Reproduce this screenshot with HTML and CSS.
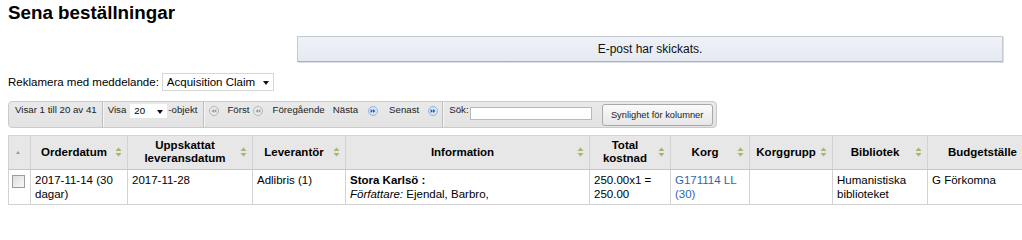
FILE: index.html
```html
<!DOCTYPE html>
<html lang="sv">
<head>
<meta charset="utf-8">
<title>Sena beställningar</title>
<link rel="stylesheet" href="styles.css">
</head>
<body>
<h1 class="title">Sena beställningar</h1>

<div class="msg">E-post har skickats.</div>

<div class="claim">
  <label class="claim-label" for="claim">Reklamera med meddelande:</label>
  <span class="sel-wrap sel-claim"><select id="claim" class="sel"><option>Acquisition Claim</option></select></span>
</div>

<div class="toolbar">
  <div class="seg seg-info">Visar 1 till 20 av 41</div>
  <div class="seg seg-len"><span>Visa</span><span class="sel-wrap sel-len"><select class="sel"><option>20</option></select></span><span>-objekt</span></div>
  <div class="seg seg-pages">
    <svg class="pg pg-first" width="10" height="10" viewBox="0 0 10 10"><circle cx="5" cy="5" r="4.5" class="pg-off"/><path d="M5 3L2.6 5L5 7Z M7.4 3L5 5L7.4 7Z" class="pg-off-a"/></svg>
    <span class="pg-t t-first">Först</span>
    <svg class="pg pg-prev" width="10" height="10" viewBox="0 0 10 10"><circle cx="5" cy="5" r="4.5" class="pg-off"/><path d="M5 3L2.6 5L5 7Z M7.4 3L5 5L7.4 7Z" class="pg-off-a"/></svg>
    <span class="pg-t t-prev">Föregående</span>
    <span class="pg-t t-next">Nästa</span>
    <svg class="pg pg-next" width="10" height="10" viewBox="0 0 10 10"><circle cx="5" cy="5" r="4.5" class="pg-on"/><path d="M2.6 3L5 5L2.6 7Z M5 3L7.4 5L5 7Z" class="pg-on-a"/></svg>
    <span class="pg-t t-last">Senast</span>
    <svg class="pg pg-last" width="10" height="10" viewBox="0 0 10 10"><circle cx="5" cy="5" r="4.5" class="pg-on"/><path d="M2.6 3L5 5L2.6 7Z M5 3L7.4 5L5 7Z" class="pg-on-a"/></svg>
  </div>
  <div class="seg seg-search"><label for="q">Sök:</label><input id="q" class="search" type="text"></div>
  <button class="colvis" type="button">Synlighet för kolumner</button>
</div>

<table class="grid">
  <colgroup>
    <col class="c-chk"><col class="c-od"><col class="c-ud"><col class="c-lev"><col class="c-info"><col class="c-cost"><col class="c-korg"><col class="c-kg"><col class="c-bib"><col class="c-bud">
  </colgroup>
  <thead>
    <tr>
      <th class="th-chk"><span class="asc"></span></th>
      <th><div class="th-in"><span class="lbl">Orderdatum</span><svg class="sort" width="7" height="10" viewBox="0 0 7 10"><path d="M3.5 0.5L6.5 4H0.5Z M0.5 6H6.5L3.5 9.5Z"/></svg></div></th>
      <th><div class="th-in"><span class="lbl">Uppskattat leveransdatum</span><svg class="sort" width="7" height="10" viewBox="0 0 7 10"><path d="M3.5 0.5L6.5 4H0.5Z M0.5 6H6.5L3.5 9.5Z"/></svg></div></th>
      <th><div class="th-in"><span class="lbl">Leverantör</span><svg class="sort" width="7" height="10" viewBox="0 0 7 10"><path d="M3.5 0.5L6.5 4H0.5Z M0.5 6H6.5L3.5 9.5Z"/></svg></div></th>
      <th><div class="th-in"><span class="lbl">Information</span><svg class="sort" width="7" height="10" viewBox="0 0 7 10"><path d="M3.5 0.5L6.5 4H0.5Z M0.5 6H6.5L3.5 9.5Z"/></svg></div></th>
      <th><div class="th-in"><span class="lbl">Total kostnad</span><svg class="sort" width="7" height="10" viewBox="0 0 7 10"><path d="M3.5 0.5L6.5 4H0.5Z M0.5 6H6.5L3.5 9.5Z"/></svg></div></th>
      <th><div class="th-in"><span class="lbl">Korg</span><svg class="sort" width="7" height="10" viewBox="0 0 7 10"><path d="M3.5 0.5L6.5 4H0.5Z M0.5 6H6.5L3.5 9.5Z"/></svg></div></th>
      <th><div class="th-in"><span class="lbl">Korggrupp</span><svg class="sort" width="7" height="10" viewBox="0 0 7 10"><path d="M3.5 0.5L6.5 4H0.5Z M0.5 6H6.5L3.5 9.5Z"/></svg></div></th>
      <th><div class="th-in"><span class="lbl">Bibliotek</span><svg class="sort" width="7" height="10" viewBox="0 0 7 10"><path d="M3.5 0.5L6.5 4H0.5Z M0.5 6H6.5L3.5 9.5Z"/></svg></div></th>
      <th><div class="th-in"><span class="lbl">Budgetställe</span><svg class="sort" width="7" height="10" viewBox="0 0 7 10"><path d="M3.5 0.5L6.5 4H0.5Z M0.5 6H6.5L3.5 9.5Z"/></svg></div></th>
    </tr>
  </thead>
  <tbody>
    <tr>
      <td class="td-chk"><input class="chk" type="checkbox"></td>
      <td>2017-11-14 (30 dagar)</td>
      <td>2017-11-28</td>
      <td>Adlibris (1)</td>
      <td><b>Stora Karlsö :</b><br><i>Författare:</i> Ejendal, Barbro,</td>
      <td>250.00x1 = 250.00</td>
      <td><a class="link" href="#">G171114 LL (30)</a></td>
      <td></td>
      <td>Humanistiska biblioteket</td>
      <td>G Förkomna</td>
    </tr>
  </tbody>
</table>
</body>
</html>
```

FILE: styles.css
```css
html, body {
  margin: 0;
  overflow: hidden;
}

body {
  padding: 0 8px;
  background: #fff;
  color: #000;
  font-family: "Liberation Sans", Arial, sans-serif;
  font-size: 11.5px;
}

.title {
  margin: 2px 0 0;
  font-size: 18.8px;
  line-height: 22px;
  font-weight: bold;
}

.msg {
  box-sizing: border-box;
  margin: 12px 0 0 289px;
  width: 706px;
  height: 26px;
  border: 1px solid #c3cad4;
  border-bottom-color: #a9b1bd;
  background: linear-gradient(#eff2f7, #e5eaf2);
  box-shadow: 1px 1px 0 #dcdfe4;
  text-align: center;
  font-size: 12px;
  line-height: 24px;
  color: #111;
}

.claim {
  display: flex;
  align-items: center;
  gap: 3px;
  margin-top: 11px;
  height: 18px;
}

.sel-wrap {
  position: relative;
  display: inline-block;
  box-sizing: border-box;
  background: #fff;
}

.sel-wrap::after {
  content: "";
  position: absolute;
  top: 50%;
  right: 4px;
  margin-top: -1px;
  border-left: 3.5px solid transparent;
  border-right: 3.5px solid transparent;
  border-top: 4px solid #111;
}

.sel {
  appearance: none;
  -webkit-appearance: none;
  border: 0;
  background: transparent;
  font-family: inherit;
  color: #000;
  margin: 0;
  outline: none;
}

.sel-claim {
  width: 112px;
  height: 18px;
  border: 1px solid #d6d6d6;
}

.sel-claim .sel {
  font-size: 11.5px;
  height: 16px;
  line-height: 16px;
  padding: 0 0 0 4px;
  width: 100%;
}

.toolbar {
  display: inline-flex;
  box-sizing: border-box;
  height: 27px;
  margin-top: 10px;
  padding-right: 3px;
  border: 1px solid #cbcbcb;
  border-radius: 4px;
  background: linear-gradient(#e9e9e9, #e3e3e3);
  font-size: 9.7px;
  color: #222;
}

.seg {
  display: flex;
  align-items: flex-start;
  padding-top: 1px;
  line-height: 14px;
  border-right: 1px solid #bdbdbd;
  box-shadow: 1px 0 0 #f7f7f7;
  white-space: nowrap;
}

.seg-info {
  padding-left: 6px;
  padding-right: 5px;
}

.seg-len {
  padding-left: 5px;
  padding-right: 6px;
}

.sel-len {
  width: 37px;
  height: 14px;
  margin: 1px 1px 0 4px;
}

.sel-len .sel {
  font-size: 9.7px;
  height: 14px;
  line-height: 14px;
  padding: 0 0 0 4px;
  width: 100%;
}

.seg-pages {
  padding-left: 5px;
  padding-right: 4px;
}

.pg {
  display: block;
  margin-top: 3px;
  flex: none;
}

.pg-off { fill: #ebebeb; stroke: #b4b4b4; stroke-width: 1; }
.pg-off-a { fill: #9a9a9a; }
.pg-on { fill: #d7e5f7; stroke: #96b4de; stroke-width: 1; }
.pg-on-a { fill: #2a5fae; }

.t-first { margin-left: 8px; }
.pg-prev { margin-left: 3px; }
.t-prev { margin-left: 10px; }
.t-next { margin-left: 8px; }
.pg-next { margin-left: 10px; }
.t-last { margin-left: 11px; }
.pg-last { margin-left: 9px; }

.seg-search {
  padding-left: 6px;
  padding-right: 0;
  border-right: 0;
  box-shadow: none;
}

.search {
  box-sizing: border-box;
  width: 122px;
  height: 13px;
  margin: 4px 0 0 1px;
  padding: 0 2px;
  border: 1px solid #b9b9b9;
  background: #fff;
  font-size: 9.7px;
}

.colvis {
  box-sizing: border-box;
  width: 111px;
  height: 22px;
  margin: 2px 0 0 10px;
  padding: 0;
  border: 1px solid #a9a9a9;
  border-radius: 3px;
  background: linear-gradient(#fbfbfb, #e6e6e6);
  font-family: inherit;
  font-size: 9.3px;
  color: #222;
}

.grid {
  margin-top: 7px;
  border-collapse: collapse;
  table-layout: fixed;
  width: 1039px;
}

.c-chk { width: 22px; }
.c-od { width: 97px; }
.c-ud { width: 125px; }
.c-lev { width: 93px; }
.c-info { width: 244px; }
.c-cost { width: 81px; }
.c-korg { width: 79px; }
.c-kg { width: 83px; }
.c-bib { width: 95px; }
.c-bud { width: 120px; }

.grid th {
  padding: 3px 5px 4px 4px;
  background: #e7e7e7;
  border: 1px solid #d3d3d3;
  border-bottom-color: #c4c4c4;
  font-weight: bold;
  line-height: 13px;
  vertical-align: middle;
}

.th-in {
  display: flex;
  align-items: center;
}

.lbl {
  flex: 1;
  text-align: center;
}

.sort {
  flex: none;
  margin-left: 2px;
  fill: #a6b56c;
}

.th-chk {
  text-align: left;
}

.grid th.th-chk {
  padding-left: 7px;
}

.asc {
  display: inline-block;
  vertical-align: middle;
  border-left: 2.5px solid transparent;
  border-right: 2.5px solid transparent;
  border-bottom: 3px solid #9a9a9a;
}

.grid td {
  padding: 3px 4px;
  border: 1px solid #d2d2d2;
  line-height: 14px;
  vertical-align: top;
  background: #fff;
}

.grid td.td-chk {
  padding: 5px 2px 0 3px;
}

.chk {
  appearance: none;
  -webkit-appearance: none;
  display: block;
  box-sizing: border-box;
  width: 13px;
  height: 13px;
  margin: 0;
  border: 1px solid #9c9c9c;
  background: linear-gradient(135deg, #dedede, #f8f8f8);
}

.link {
  color: #2f66aa;
  text-decoration: none;
}
```
